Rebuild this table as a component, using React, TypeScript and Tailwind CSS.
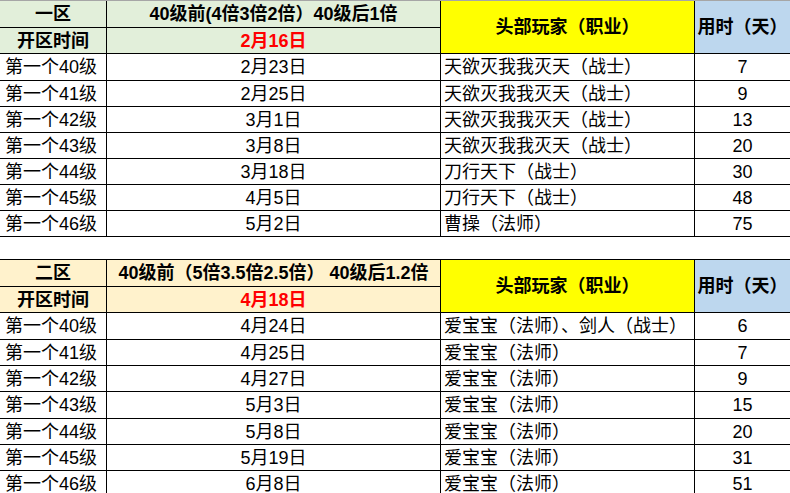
import React from 'react';

type Row = { level: string; date: string; player: string; days: string };

const zoneOne: Row[] = [
  { level: '第一个40级', date: '2月23日', player: '天欲灭我我灭天（战士）', days: '7' },
  { level: '第一个41级', date: '2月25日', player: '天欲灭我我灭天（战士）', days: '9' },
  { level: '第一个42级', date: '3月1日', player: '天欲灭我我灭天（战士）', days: '13' },
  { level: '第一个43级', date: '3月8日', player: '天欲灭我我灭天（战士）', days: '20' },
  { level: '第一个44级', date: '3月18日', player: '刀行天下（战士）', days: '30' },
  { level: '第一个45级', date: '4月5日', player: '刀行天下（战士）', days: '48' },
  { level: '第一个46级', date: '5月2日', player: '曹操（法师）', days: '75' },
];

const zoneTwo: Row[] = [
  { level: '第一个40级', date: '4月24日', player: '爱宝宝（法师）、剑人（战士）', days: '6' },
  { level: '第一个41级', date: '4月25日', player: '爱宝宝（法师）', days: '7' },
  { level: '第一个42级', date: '4月27日', player: '爱宝宝（法师）', days: '9' },
  { level: '第一个43级', date: '5月3日', player: '爱宝宝（法师）', days: '15' },
  { level: '第一个44级', date: '5月8日', player: '爱宝宝（法师）', days: '20' },
  { level: '第一个45级', date: '5月19日', player: '爱宝宝（法师）', days: '31' },
  { level: '第一个46级', date: '6月8日', player: '爱宝宝（法师）', days: '51' },
];

const cell = 'box-border border-b border-black flex items-center whitespace-nowrap overflow-visible';

function ZoneTable({
  zone,
  note,
  openDate,
  rows,
  headBg,
  topBorder,
  rowsClass,
}: {
  zone: string;
  note: string;
  openDate: string;
  rows: Row[];
  headBg: string;
  topBorder: string;
  rowsClass: string;
}) {
  return (
    <div className={`grid grid-cols-[107px_334px_254px_95px] border-t ${topBorder} ${rowsClass}`}>
      <div className={`${cell} border-r justify-center font-bold ${headBg}`}>{zone}</div>
      <div className={`${cell} border-r justify-center font-bold ${headBg}`}>{note}</div>
      <div className={`${cell} border-r justify-center font-bold row-span-2 bg-[#ffff00]`}>头部玩家（职业）</div>
      <div className={`${cell} justify-center font-bold row-span-2 bg-[#bdd7ee]`}>用时（天）</div>
      <div className={`${cell} border-r justify-center font-bold ${headBg}`}>开区时间</div>
      <div className={`${cell} border-r justify-center font-bold text-[#ff0000] ${headBg}`}>{openDate}</div>
      {rows.map((r) => (
        <React.Fragment key={r.level}>
          <div className={`${cell} border-r pl-[5px]`}>{r.level}</div>
          <div className={`${cell} border-r justify-center`}>{r.date}</div>
          <div className={`${cell} border-r pl-[3px]`}>{r.player}</div>
          <div className={`${cell} justify-center`}>{r.days}</div>
        </React.Fragment>
      ))}
    </div>
  );
}

export default function App() {
  return (
    <div
      className="w-[790px] h-[493px] overflow-hidden bg-white text-black text-[18px] leading-none"
      style={{ fontFamily: '"Liberation Sans", "Noto Sans CJK SC", sans-serif' }}
    >
      <ZoneTable
        zone="一区"
        note="40级前(4倍3倍2倍）40级后1倍"
        openDate="2月16日"
        rows={zoneOne}
        headBg="bg-[#e2efda]"
        topBorder="border-[#a6a6a6]"
        rowsClass="grid-rows-[27px_26px_27px_26px_26px_26px_26px_26px_26px]"
      />
      <div className="h-[22px]" />
      <ZoneTable
        zone="二区"
        note="40级前（5倍3.5倍2.5倍） 40级后1.2倍"
        openDate="4月18日"
        rows={zoneTwo}
        headBg="bg-[#fff2cc]"
        topBorder="border-black"
        rowsClass="grid-rows-[27px_26px_27px_26px_26px_27px_26px_26px_27px]"
      />
    </div>
  );
}
